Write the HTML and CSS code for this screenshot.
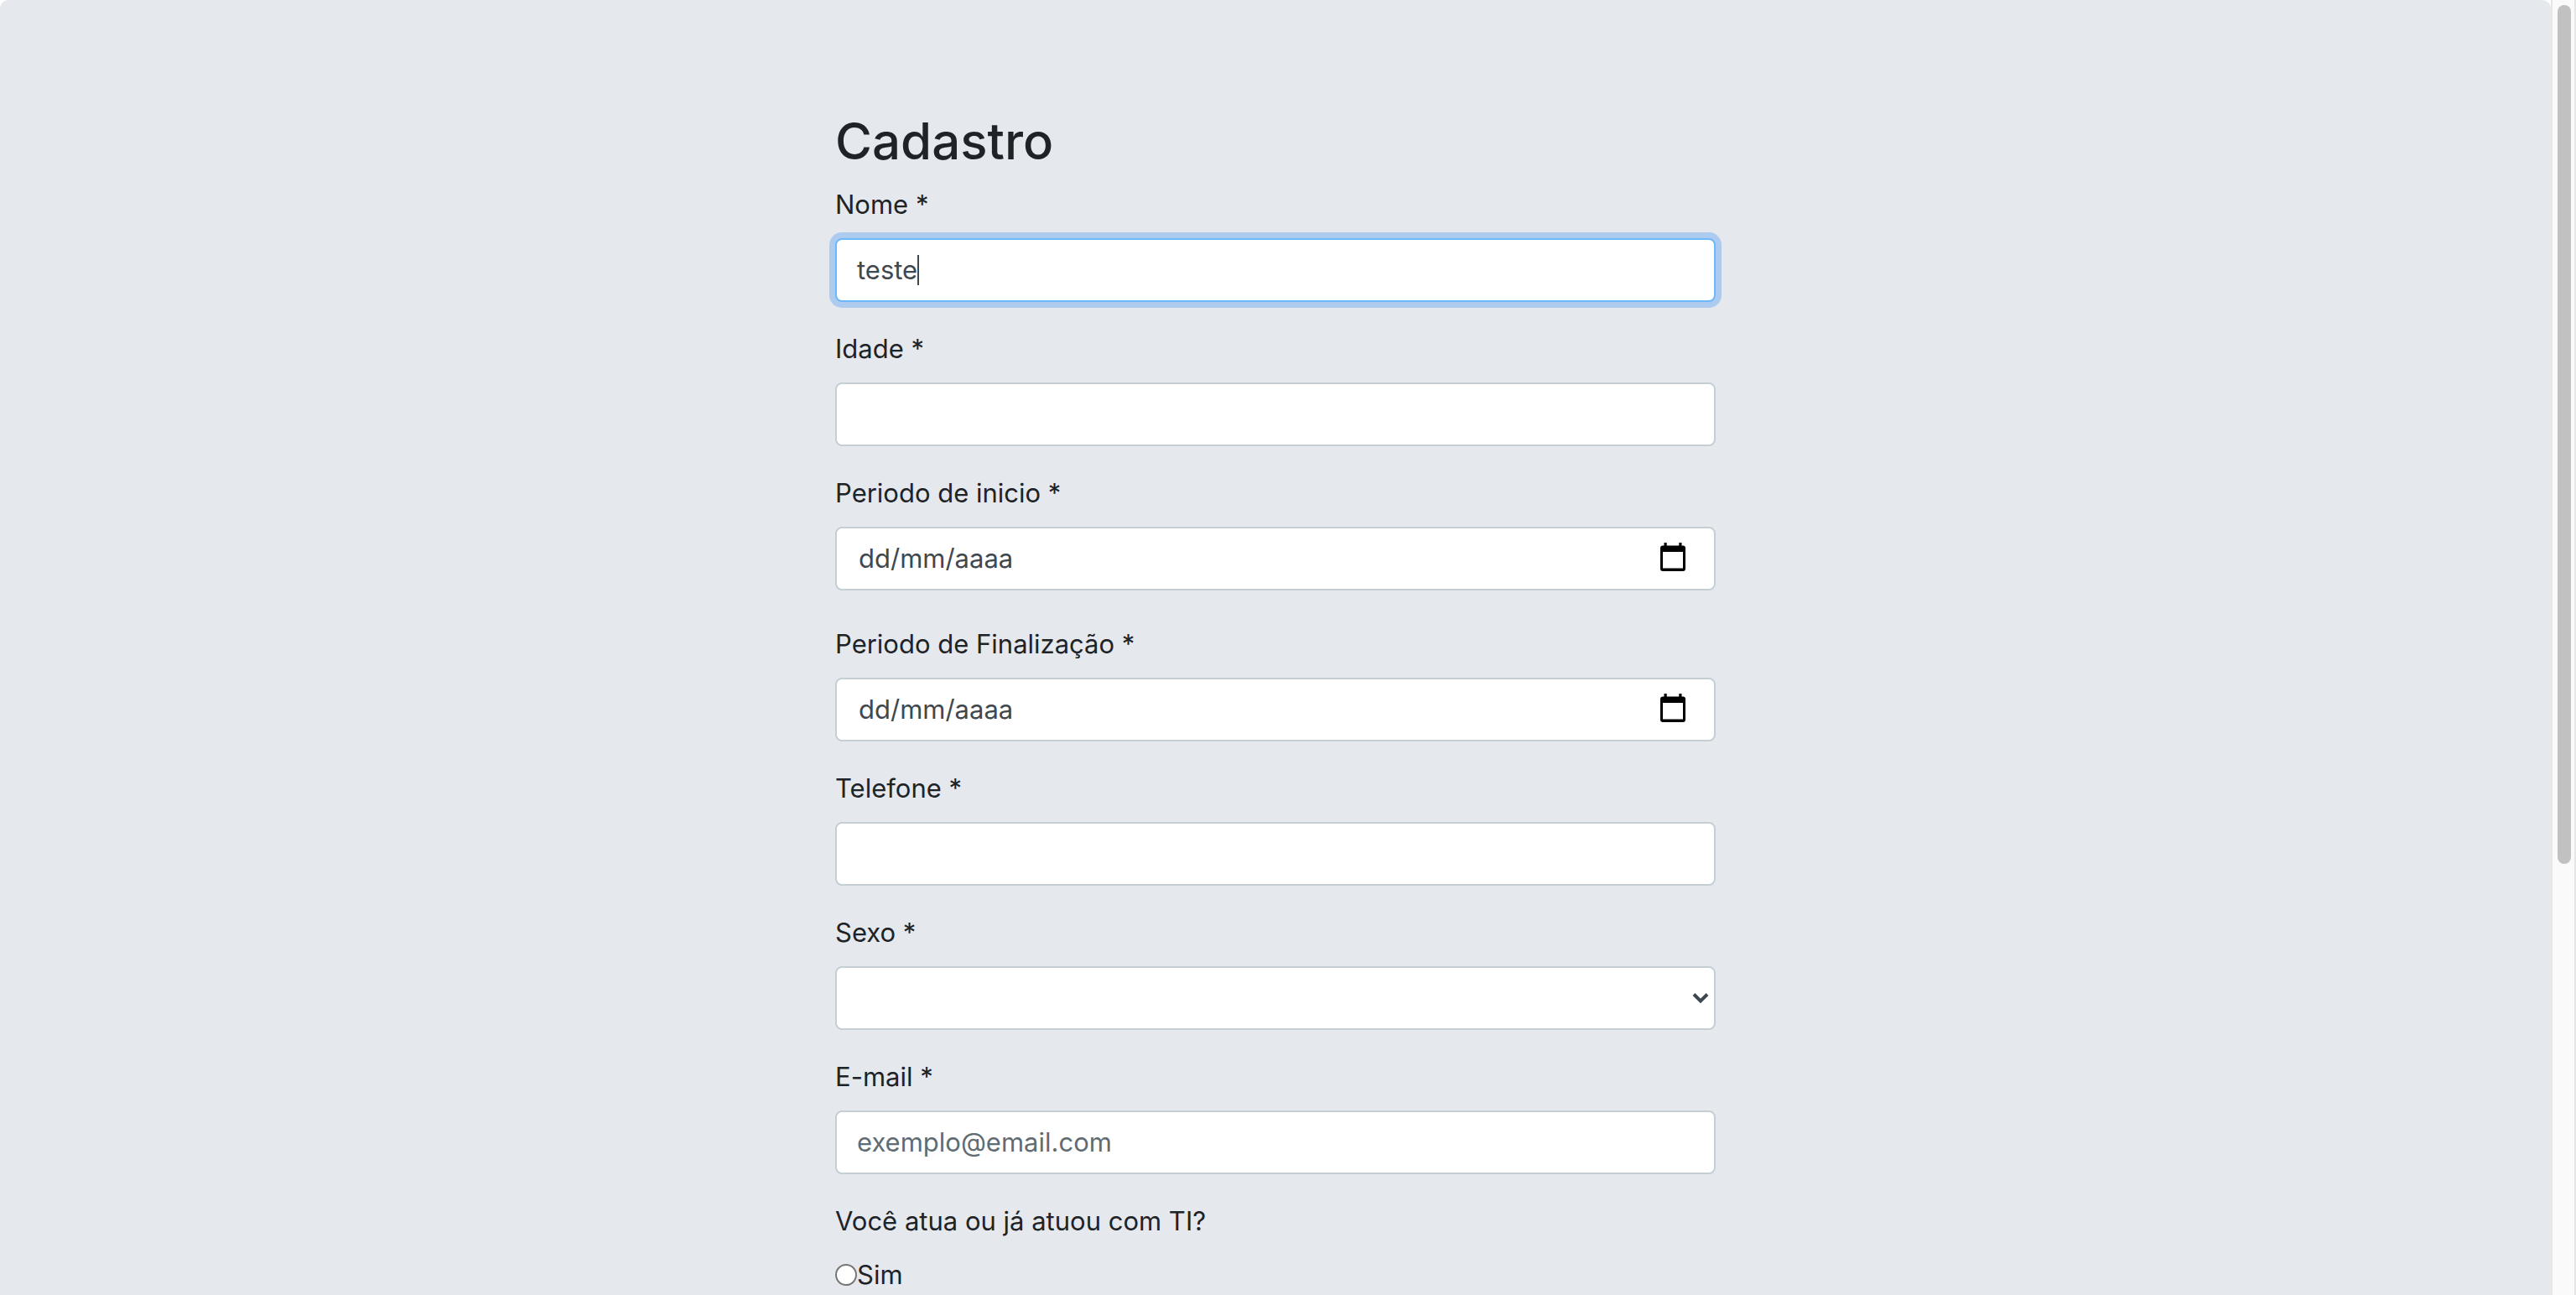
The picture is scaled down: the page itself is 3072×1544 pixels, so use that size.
FILE: index.html
```html
<!DOCTYPE html>
<html lang="pt-BR">
<head>
  <meta charset="utf-8">
  <meta name="viewport" content="width=device-width, initial-scale=1">
  <title>Cadastro</title>
  <link rel="stylesheet" href="styles.css">
</head>
<body>
  <main class="jumbotron">
    <form class="form">
      <h1 class="title">Cadastro</h1>

      <div class="group">
        <label for="nome">Nome *</label>
        <div class="control control-active">
          <input class="control-input control-fit" id="nome" type="text" value="teste">
          <span class="caret"></span>
        </div>
      </div>

      <div class="group">
        <label for="idade">Idade *</label>
        <div class="control"><input class="control-input" id="idade" type="text"></div>
      </div>

      <div class="group group-wide">
        <label for="inicio">Periodo de inicio *</label>
        <div class="control control-date">
          <input class="control-input date-input" id="inicio" type="text" placeholder="dd/mm/aaaa">
          <button class="calendar" type="button" aria-label="Abrir calendário">
            <svg width="30" height="34" viewBox="0 0 30 34" aria-hidden="true"><path fill-rule="evenodd" d="M4.500 0h3.200v3.500h14.600V0h3.200v3.500H27a3 3 0 0 1 3 3V31a3 3 0 0 1-3 3H3a3 3 0 0 1-3-3V6.500a3 3 0 0 1 3-3h1.500zM3 11v19.500h24V11z"/></svg>
          </button>
        </div>
      </div>

      <div class="group">
        <label for="fim">Periodo de Finalização *</label>
        <div class="control control-date">
          <input class="control-input date-input" id="fim" type="text" placeholder="dd/mm/aaaa">
          <button class="calendar" type="button" aria-label="Abrir calendário">
            <svg width="30" height="34" viewBox="0 0 30 34" aria-hidden="true"><path fill-rule="evenodd" d="M4.500 0h3.200v3.500h14.600V0h3.200v3.500H27a3 3 0 0 1 3 3V31a3 3 0 0 1-3 3H3a3 3 0 0 1-3-3V6.500a3 3 0 0 1 3-3h1.500zM3 11v19.500h24V11z"/></svg>
          </button>
        </div>
      </div>

      <div class="group">
        <label for="telefone">Telefone *</label>
        <div class="control"><input class="control-input" id="telefone" type="tel"></div>
      </div>

      <div class="group">
        <label for="sexo">Sexo *</label>
        <div class="control control-select">
          <select class="control-input select" id="sexo"><option value=""></option></select>
          <svg class="chevron" width="20" height="14" viewBox="0 0 20 14" aria-hidden="true"><path d="M2 2.500l8 8 8-8" fill="none" stroke="currentColor" stroke-width="4"/></svg>
        </div>
      </div>

      <div class="group">
        <label for="email">E-mail *</label>
        <div class="control"><input class="control-input" id="email" type="email" placeholder="exemplo@email.com"></div>
      </div>

      <fieldset class="choices">
        <legend>Você atua ou já atuou com TI?</legend>
        <div class="choice">
          <input class="radio" id="sim" type="radio" name="ti">
          <label for="sim">Sim</label>
        </div>
      </fieldset>
    </form>
  </main>
  <div class="scrollbar"><div class="thumb"></div></div>
</body>
</html>
```
FILE: styles.css
```css
* {
  box-sizing: border-box;
}

body {
  margin: 0;
  display: flex;
  min-height: 100vh;
  background: #fff;
  color: #1d2326;
  font-family: Inter, "Liberation Sans", sans-serif;
  font-size: 31px;
  line-height: 48px;
}

.jumbotron {
  flex: 1;
  padding: 128px 32px 0;
  background: #e5e9ee;
  border-radius: 10px 10px 0 0;
}

.form {
  max-width: 1050px;
  margin: 0 auto;
}

.title {
  margin: 0 0 12px;
  font-size: 60px;
  font-weight: 500;
  line-height: 80px;
}

.group {
  display: flex;
  flex-direction: column;
  gap: 16px;
  margin-bottom: 32px;
}

.group-wide {
  margin-bottom: 40px;
}

.control {
  display: flex;
  align-items: center;
  height: 76px;
  padding: 0 24px;
  background: #fff;
  border: 2px solid #c5cfd3;
  border-radius: 8px;
  color: #3f484e;
}

.control-active {
  border-color: #6cb8fb;
  box-shadow: 0 0 0 7px #adcaef;
}

.control-input {
  flex: 1;
  min-width: 0;
  height: 48px;
  padding: 0;
  border: 0;
  outline: 0;
  background: transparent;
  color: inherit;
  font: inherit;
}

.control-input::placeholder {
  color: #5f6c73;
  opacity: 1;
}

.control-fit {
  flex: none;
  field-sizing: content;
  caret-color: transparent;
}

.caret {
  width: 2px;
  height: 36px;
  background: #3f484e;
}

.control-date {
  padding: 0 34px 0 26px;
}

.date-input::placeholder {
  color: #3f484e;
}

.calendar {
  display: flex;
  padding: 0 0 4px;
  border: 0;
  background: transparent;
}

.control-select {
  padding: 0 6px 0 24px;
}

.select {
  appearance: none;
}

.chevron {
  color: #3f484e;
}

.choices {
  margin: 0;
  padding: 0;
  border: 0;
}

.choices legend {
  padding: 0 0 16px;
}

.choice {
  display: flex;
  align-items: center;
}

.radio {
  appearance: none;
  width: 26px;
  height: 26px;
  margin: 0;
  background: #fff;
  border: 2px solid #767676;
  border-radius: 50%;
}

.scrollbar {
  width: 30px;
  padding: 6px 4px 6px 6px;
  background: #fafafa;
  border: solid #e6e6e6;
  border-width: 0 2px;
}

.thumb {
  width: 16px;
  height: 1024px;
  background: #c1c1c1;
  border-radius: 8px;
}
```
